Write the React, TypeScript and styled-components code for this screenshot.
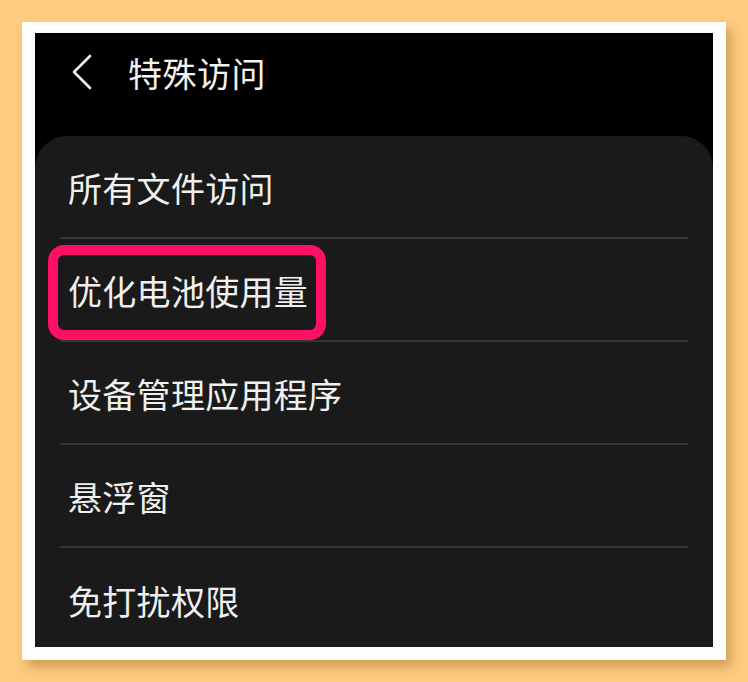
import React from "react";
import styled, { createGlobalStyle } from "styled-components";

const GlobalStyle = createGlobalStyle`
  html, body {
    margin: 0;
    padding: 0;
    background: #fecb80;
  }
  body {
    font-family: "Noto Sans CJK SC", "Noto Sans", sans-serif;
  }
`;

const items = ["所有文件访问", "优化电池使用量", "设备管理应用程序", "悬浮窗", "免打扰权限"];
const highlighted = 1;

const App: React.FunctionComponent = (): React.ReactElement => {
  return (
    <Page>
      <GlobalStyle />
      <Frame>
        <Screen>
          <Header>
            <BackButton aria-label="Back">
              <svg width="22" height="38" viewBox="0 0 22 38" fill="none">
                <path
                  d="M19 2 L3 18 L19 34"
                  stroke="#f2f2f2"
                  strokeWidth="2.6"
                  strokeLinecap="round"
                  strokeLinejoin="round"
                />
              </svg>
            </BackButton>
            <Title>特殊访问</Title>
          </Header>
          <Card>
            {items.map((label, i) => (
              <Row key={label} $last={i === items.length - 1}>
                <Label>{label}</Label>
                {i === highlighted && <Highlight />}
              </Row>
            ))}
          </Card>
        </Screen>
      </Frame>
    </Page>
  );
};

const Page = styled.div`
  width: 748px;
  height: 682px;
  box-sizing: border-box;
  padding: 22px;
  background: #fecb80;
`;

const Frame = styled.div`
  width: 704px;
  height: 638px;
  box-sizing: border-box;
  padding: 11px 13px 13px 13px;
  background: #fdfdfd;
  box-shadow: 5px 7px 10px rgba(120, 80, 20, 0.35);
  display: flex;
`;

const Screen = styled.div`
  flex: 1;
  background: #000;
  display: flex;
  flex-direction: column;
  overflow: hidden;
`;

const Header = styled.header`
  height: 103px;
  flex-shrink: 0;
  display: flex;
  align-items: center;
  padding-left: 36px;
  padding-bottom: 24px;
  box-sizing: border-box;
`;

const BackButton = styled.div`
  display: flex;
  align-items: center;
  width: 57px;
`;

const Title = styled.h1`
  margin: 0;
  font-size: 34px;
  font-weight: 400;
  color: #f2f2f2;
  letter-spacing: 0.5px;
`;

const Card = styled.div`
  flex: 1;
  background: #1a1a1a;
  border-radius: 32px 32px 0 0;
  padding: 0 25px;
`;

const Row = styled.div<{ $last: boolean }>`
  position: relative;
  height: 103px;
  display: flex;
  align-items: center;
  padding-left: 8px;
  padding-top: 2px;
  box-sizing: border-box;
  border-bottom: ${(p) => (p.$last ? "none" : "2px solid #363636")};
`;

const Label = styled.span`
  font-size: 34px;
  font-weight: 400;
  color: #f0f0f0;
  letter-spacing: 0.3px;
`;

const Highlight = styled.div`
  position: absolute;
  left: -12px;
  top: 6px;
  width: 278px;
  height: 95px;
  box-sizing: border-box;
  border: 10px solid #ff0f66;
  border-radius: 16px;
`;

export default App;
